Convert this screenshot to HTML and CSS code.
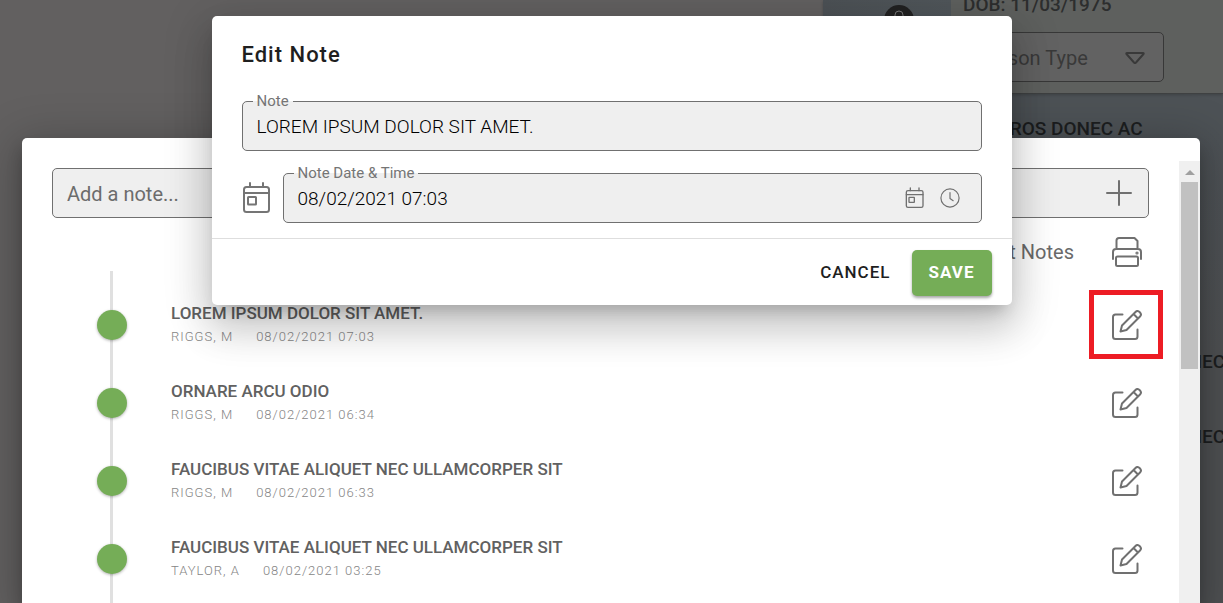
FILE: index.html
```html
<!DOCTYPE html>
<html lang="en">
<head>
<meta charset="utf-8">
<meta name="viewport" content="width=device-width, initial-scale=1">
<title>Edit Note</title>
<link rel="stylesheet" href="styles.css">
</head>
<body>
<svg class="symbols" aria-hidden="true">
  <symbol id="edit" viewBox="0 0 30 30"><path d="M10.500 4.500H3.500Q1 4.500 1 7V26.500Q1 29 3.500 29H23Q25.500 29 25.500 26.500V19.500M8.500 21.500L10 15.500L23.500 2Q25.500 0 27.800 2.200Q30 4.500 28 6.500L14.500 20L8.500 21.500M21.500 4L26 8.500"/></symbol>
  <symbol id="printer" viewBox="0 0 30 30"><path d="M4.500 12V3.500Q4.500 1 7 1H22.500L25.500 4V12M1 22V15Q1 12 4 12H26Q29 12 29 15V22M5.500 19.500H24.500Q26 19.500 26 21V27.500Q26 29 24.500 29H5.500Q4 29 4 27.500V21Q4 19.500 5.500 19.500Z"/><circle cx="25" cy="16" r="0.600"/></symbol>
  <symbol id="calendar" viewBox="0 0 30 32"><rect x="2" y="5" width="25" height="25" rx="2.500"/><path d="M2 11H27M8 1V5M21 1V5"/><rect x="6" y="15" width="8" height="7.500" rx="0.500"/></symbol>
  <symbol id="clock" viewBox="0 0 22 22"><circle cx="11" cy="11" r="10"/><path d="M11 5V11.500L14.500 14"/></symbol>
  <symbol id="plus" viewBox="0 0 26 26"><path d="M13 1V25M1 13H25"/></symbol>
</svg>

<div class="app">
  <div class="app-main"></div>
  <aside class="record">
    <header class="record-head">
      <div class="photo"><span class="badge"><svg viewBox="0 0 30 30"><path d="M11 15V10Q11 6 15 6T19 10V15M8 16H22V25H8Z"/></svg></span></div>
      <div class="person">
        <p class="dob">DOB: 11/03/1975</p>
        <button class="person-type" type="button"><span>Person Type</span><svg viewBox="0 0 20 12"><path d="M2 1H18Q19 1 18.500 2L11 10.500Q10 11.500 9 10.500L1.500 2Q1 1 2 1Z"/></svg></button>
      </div>
    </header>
    <div class="record-body">
      <p>EROS DONEC AC</p>
      <p class="side-text">DONEC</p>
      <p class="side-text side-next">DONEC</p>
    </div>
  </aside>
</div>

<main class="sheet">
  <div class="sheet-content">
    <div class="add-note">
      <input type="text" placeholder="Add a note..." aria-label="Add a note">
      <button class="icon-button" type="button" aria-label="Add"><svg class="icon-plus"><use href="#plus"/></svg></button>
    </div>
    <div class="print-row"><span>Print Notes</span><button class="icon-button" type="button" aria-label="Print notes"><svg class="icon"><use href="#printer"/></svg></button></div>
    <ol class="timeline">
      <li class="note"><span class="dot"></span><div class="note-text"><h3>LOREM IPSUM DOLOR SIT AMET.</h3><p><span>RIGGS, M</span><time>08/02/2021 07:03</time></p></div><button class="icon-button highlighted" type="button" aria-label="Edit note"><svg class="icon"><use href="#edit"/></svg></button></li>
      <li class="note"><span class="dot"></span><div class="note-text"><h3>ORNARE ARCU ODIO</h3><p><span>RIGGS, M</span><time>08/02/2021 06:34</time></p></div><button class="icon-button" type="button" aria-label="Edit note"><svg class="icon"><use href="#edit"/></svg></button></li>
      <li class="note"><span class="dot"></span><div class="note-text"><h3>FAUCIBUS VITAE ALIQUET NEC ULLAMCORPER SIT</h3><p><span>RIGGS, M</span><time>08/02/2021 06:33</time></p></div><button class="icon-button" type="button" aria-label="Edit note"><svg class="icon"><use href="#edit"/></svg></button></li>
      <li class="note"><span class="dot"></span><div class="note-text"><h3>FAUCIBUS VITAE ALIQUET NEC ULLAMCORPER SIT</h3><p><span>TAYLOR, A</span><time>08/02/2021 03:25</time></p></div><button class="icon-button" type="button" aria-label="Edit note"><svg class="icon"><use href="#edit"/></svg></button></li>
    </ol>
  </div>
  <div class="scrollbar" aria-hidden="true"><span class="scroll-arrow"></span><span class="scroll-thumb"></span></div>
</main>

<section class="dialog" role="dialog" aria-labelledby="dialog-title">
  <form>
    <div class="dialog-body">
      <h2 id="dialog-title">Edit Note</h2>
      <fieldset class="field">
        <legend><label for="note">Note</label></legend>
        <input id="note" type="text" value="LOREM IPSUM DOLOR SIT AMET.">
      </fieldset>
      <div class="date-row">
        <svg class="icon-calendar"><use href="#calendar"/></svg>
        <fieldset class="field">
          <legend><label for="date">Note Date &amp; Time</label></legend>
          <div class="field-line">
            <input id="date" type="text" value="08/02/2021 07:03">
            <button class="icon-button" type="button" aria-label="Pick date"><svg class="icon-small"><use href="#calendar"/></svg></button>
            <button class="icon-button" type="button" aria-label="Pick time"><svg class="icon-small icon-clock"><use href="#clock"/></svg></button>
          </div>
        </fieldset>
      </div>
    </div>
    <footer class="actions">
      <button class="button" type="button">CANCEL</button>
      <button class="button primary" type="button">SAVE</button>
    </footer>
  </form>
</section>
</body>
</html>
```
FILE: styles.css
```css
* { box-sizing: border-box; }
body {
  margin: 0;
  height: 100vh;
  overflow: hidden;
  font-family: Roboto, sans-serif;
  color: #1f1f1f;
  background: #626060;
}
h2, h3, p, ol, fieldset { margin: 0; padding: 0; }
ol { list-style: none; }
button, input { font: inherit; color: inherit; border: 0; background: none; padding: 0; }
input { min-width: 0; outline: 0; }
svg { display: block; fill: none; stroke: currentColor; stroke-width: 2; stroke-linecap: round; stroke-linejoin: round; }
.symbols { position: absolute; width: 0; height: 0; }
.icon-button { color: #707070; flex: none; }
.icon { width: 30px; height: 30px; }
.icon-plus { width: 26px; height: 26px; }
.icon-small { width: 20px; height: 22px; }
.icon-clock { stroke-width: 1.3; }
.icon-calendar { width: 30px; height: 32px; color: #757575; }

.app { display: flex; height: 100vh; }
.app-main { flex: 1; }
.record { width: 400px; background: linear-gradient(#4d5256 20%, #4e5052 60%); }
.record-head { display: flex; height: 94px; border-bottom: 1px solid #3f4142; box-shadow: 0 1px 3px rgba(0, 0, 0, .2); }
.photo { flex: none; width: 128px; padding: 5px 61px; background: linear-gradient(90deg, #4c5155, #50565a); }
.badge { display: flex; width: 30px; height: 30px; border-radius: 50%; background: #222; color: #777; }
.badge svg { width: 30px; height: 30px; stroke-width: 1; }
.person { flex: 1; padding: 0 59px 0 12px; background: #5e605e; }
.dob { margin-top: -7px; margin-bottom: 15px; font-size: 19px; line-height: 24px; font-weight: 500; color: #2d2e2e; }
.person-type {
  display: flex; align-items: center; justify-content: space-between;
  width: 100%; height: 50px; padding: 2px 18px 0 14px;
  border: 1px solid #383838; border-radius: 5px;
  background: #626262; color: #393939; font-size: 20px;
}
.person-type svg { width: 20px; height: 12px; }
.record-body { padding: 23px 0 0 176px; font-size: 19px; line-height: 24px; font-weight: 500; color: #1c1e1f; white-space: nowrap; }
.side-text { margin: 209px 0 0 164px; }
.side-next { margin-top: 51px; }

.sheet {
  position: absolute; inset: 138px 23px 0 22px;
  display: flex;
  border-radius: 5px 5px 0 0; background: #fff;
  box-shadow: 0 11px 15px rgba(0, 0, 0, .2), 0 9px 46px 8px rgba(0, 0, 0, .22);
}
.sheet-content { flex: 1; padding: 30px 30px 0; }
.add-note {
  display: flex; align-items: center; height: 50px; padding: 0 16px 0 14px;
  border: 1px solid #707070; border-radius: 5px; background: #efefef;
}
.add-note input { flex: 1; padding-top: 2px; font-size: 20px; }
.add-note input::placeholder { color: #6c6c6c; opacity: 1; }
.print-row { display: flex; align-items: center; justify-content: flex-end; gap: 38px; height: 68px; padding-right: 7px; font-size: 20px; color: #6a6a6a; }
.timeline {
  margin-top: -15px;
  padding: 15px 0 24px;
  background: linear-gradient(#e0e0e0, #e0e0e0) 58px 0 / 3px 100% no-repeat;
}
.note { display: flex; align-items: center; height: 78px; padding: 0 7px 0 45px; }
.dot { flex: none; width: 30px; height: 30px; border-radius: 50%; background: #75ad57; box-shadow: 0 1px 3px rgba(0, 0, 0, .3); }
.note-text { flex: 1; padding: 0 0 0 44px; }
.note h3 { font-size: 17px; line-height: 24px; font-weight: 500; color: #616161; }
.note p { display: flex; gap: 23px; font-size: 13px; line-height: 24px; letter-spacing: 1px; font-weight: 300; color: #858585; }
.highlighted { position: relative; }
.highlighted::after { content: ""; position: absolute; inset: -20px -21px -19px -23px; border: 5px solid #ed1c24; }

.scrollbar { display: flex; flex-direction: column; align-items: center; width: 21px; margin-top: 23px; background: #f0f0f0; }
.scroll-arrow { margin: 9px 0 7px; border: 5px solid transparent; border-top: 0; border-bottom-color: #a0a0a0; }
.scroll-thumb { width: 17px; height: 187px; background: #c1c1c1; }

.dialog {
  position: absolute; top: 16px; left: 0; right: 0;
  width: calc(100% - 32px); max-width: 800px; margin: 0 auto;
  border-radius: 5px; background: #fff;
  box-shadow: 0 11px 15px -7px rgba(0, 0, 0, .2), 0 24px 38px 3px rgba(0, 0, 0, .14), 0 9px 46px 8px rgba(0, 0, 0, .12);
}
.dialog-body { padding: 23px 30px 15px; }
.dialog h2 { margin-bottom: 21px; font-size: 22px; line-height: 32px; font-weight: 500; letter-spacing: 1px; }
.field { flex: 1; min-width: 0; border: 1px solid #707070; border-radius: 5px; background: #efefef; padding: 0 14px 8px; }
.field legend { margin-left: -4px; padding: 0 4px; font-size: 15px; line-height: 18px; color: #757575; }
.field input { display: block; width: 100%; height: 32px; font-size: 19px; font-weight: 300; color: #000; }
.field-line { display: flex; align-items: center; gap: 15px; padding-right: 7px; }
.date-row { display: flex; align-items: flex-end; gap: 11px; margin-top: 13px; }
.icon-calendar { flex: none; margin-bottom: 9px; }
.actions { display: flex; justify-content: flex-end; gap: 8px; padding: 11px 20px 9px; border-top: 1px solid #dedede; }
.button { height: 46px; padding: 0 13px 2px; border-radius: 5px; font-size: 17px; font-weight: 500; letter-spacing: 1px; }
.primary { min-width: 80px; background: #75ad57; color: #fff; font-weight: 700; box-shadow: 0 2px 3px rgba(0, 0, 0, .35); }
```
